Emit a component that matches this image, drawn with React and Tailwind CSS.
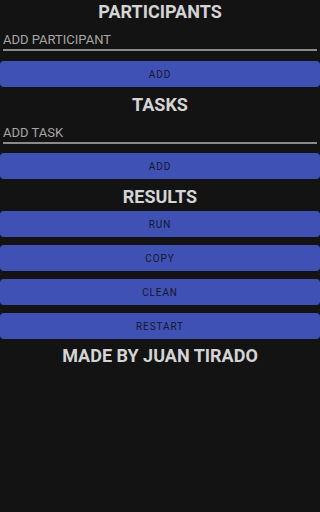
import React from 'react'

const font = { fontFamily: 'Roboto, "Noto Sans", sans-serif' }

function Heading({ children, className = '' }) {
    return (
        <h2 className={'h-6 text-center text-[18px] leading-6 font-bold text-[#d4d4d4] ' + className}>{children}</h2>
    )
}

function Btn({ children, className = '' }) {
    return (
        <button className={'w-full h-[26px] rounded-[4px] bg-[#3f51b5] text-[10px] tracking-[0.9px] text-[#15172a] ' + className}>
            {children}
        </button>
    )
}

function Field({ placeholder }) {
    return (
        <div className="px-[3px]">
            <input
                placeholder={placeholder}
                className="w-full h-[27px] pt-[5px] bg-transparent border-b-2 border-[#8a8a8a] text-[13px] text-[#bdbdbd] placeholder:text-[#a6a6a6] outline-none"
            />
        </div>
    )
}

export default function App() {
    return (
        <div className="w-full min-h-screen bg-[#131313] flex flex-col" style={font}>
            <Heading>PARTICIPANTS</Heading>
            <Field placeholder="ADD PARTICIPANT" />
            <Btn className="mt-[10px]">ADD</Btn>
            <Heading className="mt-[6px]">TASKS</Heading>
            <Field placeholder="ADD TASK" />
            <Btn className="mt-[9px]">ADD</Btn>
            <Heading className="mt-[6px]">RESULTS</Heading>
            <div className="mt-[2px] flex flex-col gap-2">
                <Btn>RUN</Btn>
                <Btn>COPY</Btn>
                <Btn>CLEAN</Btn>
                <Btn>RESTART</Btn>
            </div>
            <Heading className="mt-[5px]">MADE BY JUAN TIRADO</Heading>
        </div>
    )
}
